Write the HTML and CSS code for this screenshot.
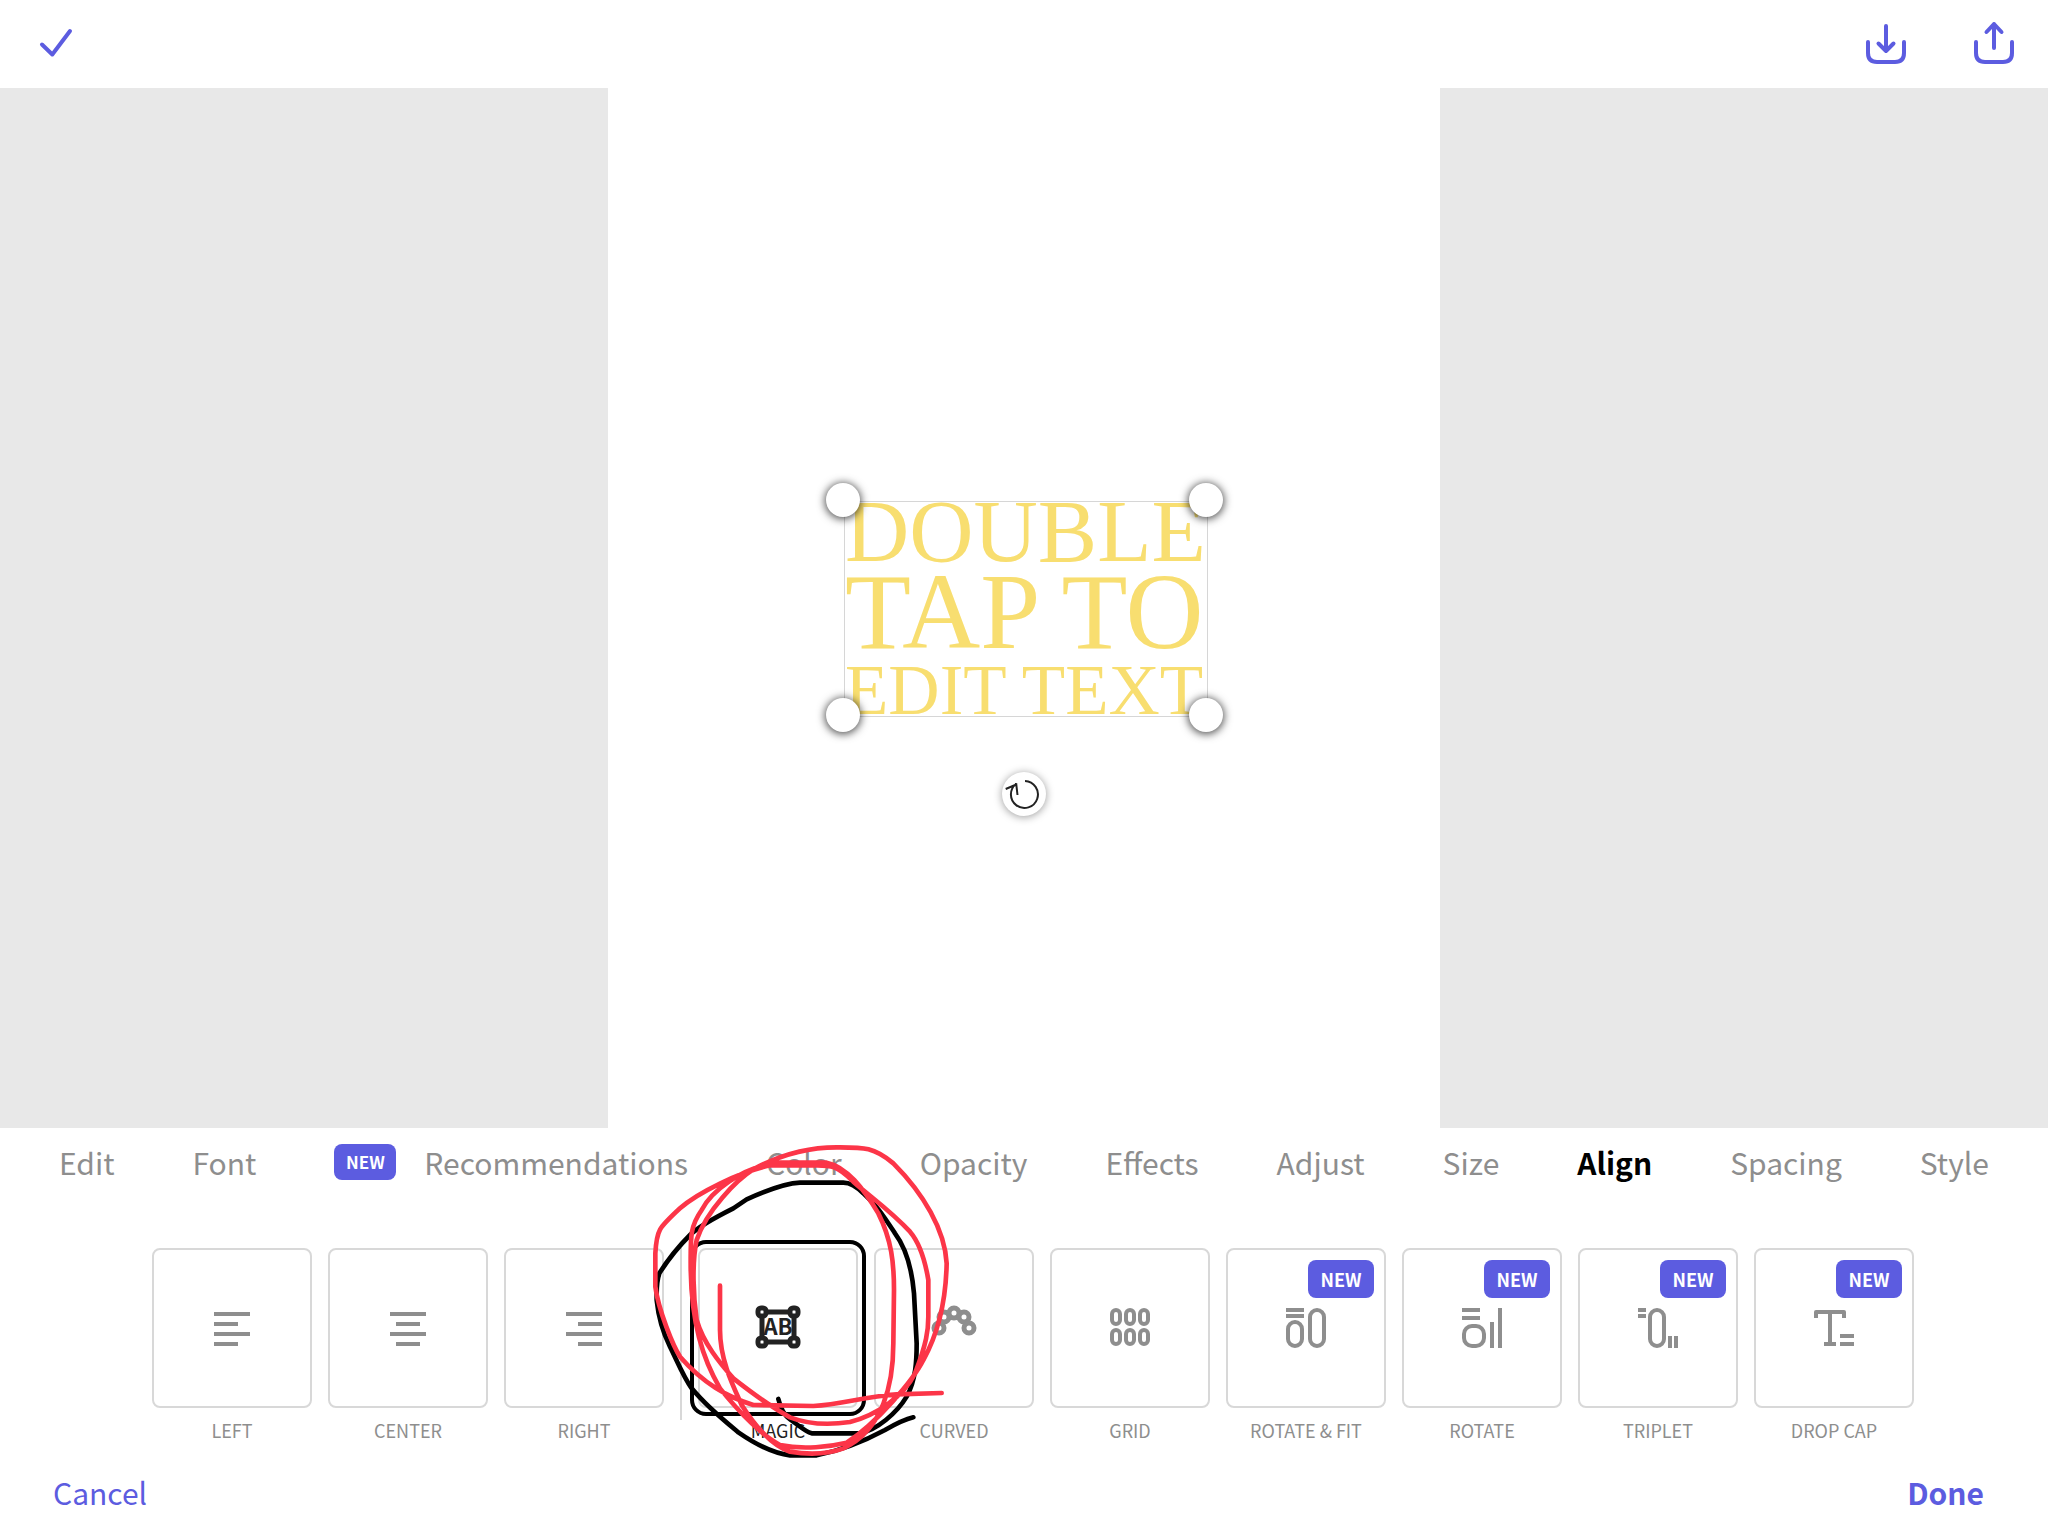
FILE: index.html
```html
<!DOCTYPE html>
<html lang="en">
<head>
<meta charset="utf-8">
<meta name="viewport" content="width=device-width, initial-scale=1">
<title>Text alignment</title>
<link rel="stylesheet" href="styles.css">
</head>
<body>
<div class="editor">
  <header class="topbar">
    <button class="icon-button" type="button" aria-label="Finish">
      <svg class="icon" viewBox="0 0 48 48"><path d="M10 24.500L20.300 34.500L38 11"/></svg>
    </button>
    <div class="topbar-group">
      <button class="icon-button" type="button" aria-label="Download">
        <svg class="icon" viewBox="0 0 48 48"><path d="M6 22V33Q6 42 15 42H33Q42 42 42 33V22M24 6V31M16.500 23.500L24 31L31.500 23.500"/></svg>
      </button>
      <button class="icon-button" type="button" aria-label="Share">
        <svg class="icon" viewBox="0 0 48 48"><path d="M6 22V33Q6 42 15 42H33Q42 42 42 33V22M24 28V4M16.500 12L24 4L31.500 12"/></svg>
      </button>
    </div>
  </header>

  <main class="stage">
    <div class="artboard">
      <div class="textbox">
        <p class="line line-1">DOUBLE</p>
        <p class="line line-2">TAP TO</p>
        <p class="line line-3">EDIT TEXT</p>
        <span class="handle nw"></span>
        <span class="handle ne"></span>
        <span class="handle sw"></span>
        <span class="handle se"></span>
        <button class="rotate" type="button" aria-label="Rotate text">
          <svg viewBox="0 0 44 44"><path d="M23 9A13.500 13.500 0 1 1 14.300 11.700M3.700 17L14.300 12.500L15.500 23"/></svg>
        </button>
      </div>
    </div>
  </main>

  <section class="panel">
    <nav class="tabs">
      <button class="tab" type="button">Edit</button>
      <button class="tab" type="button">Font</button>
      <button class="tab" type="button"><span class="badge badge-small">NEW</span>Recommendations</button>
      <button class="tab" type="button">Color</button>
      <button class="tab" type="button">Opacity</button>
      <button class="tab" type="button">Effects</button>
      <button class="tab" type="button">Adjust</button>
      <button class="tab" type="button">Size</button>
      <button class="tab active" type="button">Align</button>
      <button class="tab" type="button">Spacing</button>
      <button class="tab" type="button">Style</button>
    </nav>

    <div class="options">
      <button class="option" type="button">
        <span class="tile"><svg class="glyph" viewBox="0 0 48 48"><path class="solid" d="M6 8h36v4H6zM6 18h24v4H6zM6 28h36v4H6zM6 38h24v4H6z"/></svg></span>
        <span class="name">LEFT</span>
      </button>
      <button class="option" type="button">
        <span class="tile"><svg class="glyph" viewBox="0 0 48 48"><path class="solid" d="M6 8h36v4H6zM12 18h24v4H12zM6 28h36v4H6zM12 38h24v4H12z"/></svg></span>
        <span class="name">CENTER</span>
      </button>
      <button class="option" type="button">
        <span class="tile"><svg class="glyph" viewBox="0 0 48 48"><path class="solid" d="M6 8h36v4H6zM18 18h24v4H18zM6 28h36v4H6zM18 38h24v4H18z"/></svg></span>
        <span class="name">RIGHT</span>
      </button>
      <span class="divider"></span>
      <button class="option selected" type="button" aria-pressed="true">
        <span class="tile">
          <svg class="glyph" viewBox="0 0 48 48">
            <path d="M13 8H35M13 38H35M8 13V33M40 13V33"/>
            <rect x="4" y="4" width="8" height="8" rx="3"/><rect x="36" y="4" width="8" height="8" rx="3"/>
            <rect x="4" y="34" width="8" height="8" rx="3"/><rect x="36" y="34" width="8" height="8" rx="3"/>
            <text x="24" y="31" text-anchor="middle">AB</text>
          </svg>
        </span>
        <span class="name">MAGIC</span>
        <svg class="scribble" viewBox="0 0 1080 1020">
          <path class="ink" d="M445 807C452 835 460 855 480 868C505 885 525 905 545 910H690C740 900 800 850 830 800C858 750 860 690 860 640L852 490C845 410 825 350 795 310C765 265 740 225 700 190C675 165 655 158 640 158H510C460 160 390 190 350 208L310 235C270 255 210 285 180 315C145 350 110 395 88 430C78 460 80 480 80 510C85 560 100 610 120 650C140 690 160 740 185 775C230 830 280 870 325 907C380 945 430 970 480 976H560C640 960 700 935 765 900C800 880 825 868 850 862"/>
          <path class="marker" d="M270 467V600C270 690 310 770 335 825C370 880 420 945 480 965C540 975 600 970 640 955C760 900 790 760 790 640L792 480C792 400 785 330 745 250C700 175 650 110 590 98H450C330 110 240 190 215 240C180 290 182 320 182 400C182 580 220 690 270 775C330 850 400 920 450 945C520 960 600 950 650 938C740 880 850 750 880 690C930 600 948 500 950 400C945 300 880 190 790 100C730 50 700 52 620 52C530 52 440 80 370 118C320 150 230 240 200 330C185 400 190 500 200 570C220 640 270 700 310 745C380 800 440 840 480 862C540 885 600 885 660 876C740 855 820 800 855 730C890 640 895 600 895 560V450C885 390 870 340 840 305C780 240 720 200 670 155C620 105 600 106 560 106H420C330 125 200 190 150 235C85 295 80 300 76 370V470C85 540 130 650 150 680C220 760 290 800 370 825L550 828C640 822 700 800 800 793L935 789"/>
        </svg>
      </button>
      <button class="option" type="button">
        <span class="tile"><svg class="glyph" viewBox="0 0 48 48"><g stroke-width="5"><circle cx="9" cy="24" r="5"/><circle cx="14" cy="13" r="5"/><circle cx="24" cy="9" r="5"/><circle cx="34" cy="13" r="5"/><circle cx="39" cy="24" r="5"/></g></svg></span>
        <span class="name">CURVED</span>
      </button>
      <button class="option" type="button">
        <span class="tile"><svg class="glyph" viewBox="0 0 48 48"><rect x="6" y="6" width="8" height="14" rx="4"/><rect x="20" y="6" width="8" height="14" rx="4"/><rect x="34" y="6" width="8" height="14" rx="4"/><rect x="6" y="26" width="8" height="14" rx="4"/><rect x="20" y="26" width="8" height="14" rx="4"/><rect x="34" y="26" width="8" height="14" rx="4"/></svg></span>
        <span class="name">GRID</span>
      </button>
      <button class="option" type="button">
        <span class="tile"><svg class="glyph" viewBox="0 0 48 48"><path class="solid" d="M4 4h18v4H4zM4 10h18v4H4z"/><rect x="6" y="18" width="14" height="24" rx="7"/><rect x="28" y="6" width="14" height="36" rx="7"/></svg><span class="badge">NEW</span></span>
        <span class="name">ROTATE &amp; FIT</span>
      </button>
      <button class="option" type="button">
        <span class="tile"><svg class="glyph" viewBox="0 0 48 48"><path class="solid" d="M4 4h18v4H4zM4 12h18v4H4zM32 18h4v26h-4zM40 4h4v40h-4z"/><rect x="6" y="22" width="20" height="20" rx="8"/></svg><span class="badge">NEW</span></span>
        <span class="name">ROTATE</span>
      </button>
      <button class="option" type="button">
        <span class="tile"><svg class="glyph" viewBox="0 0 48 48"><path class="solid" d="M4 4h8v4H4zM4 10h8v4H4zM34 32h4v12h-4zM40 32h4v12h-4z"/><rect x="16" y="6" width="14" height="36" rx="7"/></svg><span class="badge">NEW</span></span>
        <span class="name">TRIPLET</span>
      </button>
      <button class="option" type="button">
        <span class="tile"><svg class="glyph" viewBox="0 0 48 48"><path d="M6 14V8H34V14M20 8V40"/><path class="solid" d="M14 38h12v4H14zM30 30h14v4H30zM30 38h14v4H30z"/></svg><span class="badge">NEW</span></span>
        <span class="name">DROP CAP</span>
      </button>
    </div>

    <footer class="actions">
      <button class="action" type="button">Cancel</button>
      <button class="action primary" type="button">Done</button>
    </footer>
  </section>
</div>
</body>
</html>
```
FILE: styles.css
```css
* {
  box-sizing: border-box;
}

body {
  margin: 0;
  background: #fff;
  color: #8e8e8e;
  font-family: "Noto Sans CJK SC", "Noto Sans", sans-serif;
}

button {
  margin: 0;
  padding: 0;
  border: 0;
  background: none;
  color: inherit;
  font: inherit;
  cursor: pointer;
}

svg {
  display: block;
  fill: none;
  stroke: currentColor;
}

.editor {
  display: flex;
  flex-direction: column;
  min-height: 100vh;
}

/* Top bar */
.topbar {
  display: flex;
  justify-content: space-between;
  align-items: center;
  padding: 20px 30px 20px 32px;
  color: #5c5ce0;
}

.topbar-group {
  display: flex;
  gap: 60px;
}

.icon {
  width: 48px;
  height: 48px;
  stroke-width: 4;
  stroke-linecap: round;
  stroke-linejoin: round;
}

/* Canvas: the artboard fills the height left by the bars */
.stage {
  display: flex;
  flex: 1;
  justify-content: center;
  background: #e8e8e8;
}

.artboard {
  display: flex;
  align-items: center;
  justify-content: center;
  height: calc(100vh - 496px);
  min-height: 480px;
  aspect-ratio: 4 / 5;
  padding: 2px 0 0 4px;
  background: #fff;
}

.textbox {
  position: relative;
  width: 364px;
  border: 1px solid #d6d6d6;
  color: #f8de70;
  font-family: "Liberation Serif", serif;
  white-space: nowrap;
}

.line {
  margin: 0;
}

.line-1 {
  font-size: 89px;
  line-height: 58px;
}

.line-2 {
  font-size: 108px;
  line-height: 104px;
}

.line-3 {
  font-size: 71px;
  line-height: 52px;
}

.handle {
  position: absolute;
  width: 34px;
  height: 34px;
  border-radius: 50%;
  background: #fff;
  box-shadow: 0 1px 8px 1px rgba(0, 0, 0, 0.7);
}

.nw { top: -19px; left: -19px; }
.ne { top: -19px; right: -16px; }
.sw { bottom: -16px; left: -19px; }
.se { bottom: -16px; right: -16px; }

.rotate {
  position: absolute;
  top: 270px;
  left: calc(50% - 24px);
  width: 44px;
  height: 44px;
  border-radius: 50%;
  background: #fff;
  box-shadow: 0 1px 8px rgba(0, 0, 0, 0.4);
  color: #222;
  stroke-width: 2;
}

/* Text tools */
.tabs {
  display: flex;
  justify-content: space-between;
  padding: 16px 59px 0;
}

.tab {
  display: flex;
  align-items: center;
  gap: 28px;
  font-size: 30px;
  line-height: 36px;
}

.tab.active {
  color: #000;
  font-weight: 700;
}

.badge {
  position: absolute;
  top: 10px;
  right: 10px;
  width: 66px;
  border-radius: 8px;
  background: #5c5ce0;
  color: #fff;
  font-size: 18px;
  font-weight: 700;
  line-height: 38px;
  text-align: center;
}

.badge-small {
  position: static;
  width: 62px;
  font-size: 17px;
  line-height: 36px;
}

.options {
  display: flex;
  justify-content: center;
  gap: 16px;
  padding: 68px 0 0 18px;
}

.option {
  position: relative;
  width: 160px;
}

.tile {
  position: relative;
  display: flex;
  align-items: center;
  justify-content: center;
  height: 160px;
  border: 2px solid #d8d8d8;
  border-radius: 8px;
}

.glyph {
  width: 48px;
  height: 48px;
  stroke-width: 4;
  stroke-linejoin: round;
}

.glyph .solid {
  fill: currentColor;
  stroke: none;
}

.glyph text {
  fill: currentColor;
  stroke: none;
  font-size: 22px;
  font-weight: 700;
}

.name {
  display: block;
  margin-top: 10px;
  font-size: 18px;
  line-height: 24px;
}

.divider {
  width: 2px;
  height: 172px;
  background: #d8d8d8;
}

.selected {
  z-index: 1;
  color: #222;
}

.selected .glyph {
  stroke-width: 5;
}

.selected .tile::before {
  content: "";
  position: absolute;
  inset: -10px;
  border: 4px solid #000;
  border-radius: 16px;
}

.scribble {
  position: absolute;
  top: -118px;
  left: -68px;
  width: 360px;
  height: 340px;
  stroke-width: 14;
  stroke-linecap: round;
  stroke-linejoin: round;
  pointer-events: none;
}

.ink {
  stroke: #000;
}

.marker {
  stroke: #fc3548;
}

/* Bottom actions */
.actions {
  display: flex;
  justify-content: space-between;
  padding: 32px 64px 26px 53px;
}

.action {
  color: #5c5ce0;
  font-size: 30px;
  line-height: 36px;
}

.action.primary {
  font-weight: 700;
}
```
